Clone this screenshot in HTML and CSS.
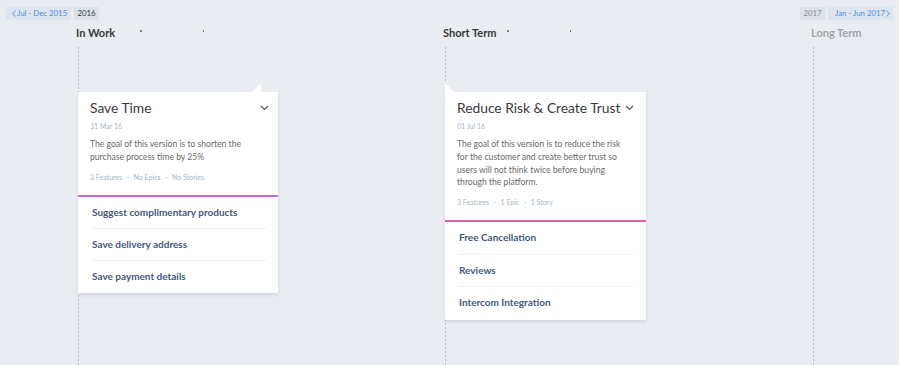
FILE: index.html
```html
<!DOCTYPE html>
<html lang="en">
<head>
<meta charset="utf-8">
<title>Roadmap</title>
<link rel="stylesheet" href="styles.css">
</head>
<body>
<div class="page">
  <div class="topbar">
    <div class="group">
      <span class="nav nav-prev"><svg class="nav-chev" width="4" height="7" viewBox="0 0 4 7"><polyline points="3.5,0.5 0.8,3.5 3.5,6.5" fill="none" stroke="#4a90e2" stroke-width="0.9"/></svg>Jul - Dec 2015</span>
      <span class="year">2016</span>
    </div>
    <div class="group">
      <span class="year muted">2017</span>
      <span class="nav nav-next">Jan - Jun 2017<svg class="nav-chev" width="4" height="7" viewBox="0 0 4 7"><polyline points="0.5,0.5 3.2,3.5 0.5,6.5" fill="none" stroke="#4a90e2" stroke-width="0.9"/></svg></span>
    </div>
  </div>
  <div class="columns">
    <div class="column">
      <div class="col-head">
        <span class="col-title">In Work</span>
        <span class="dots"><i></i><i></i></span>
      </div>
      <div class="track">
        <div class="card card-tip-right">
          <span class="tip"></span>
          <div class="card-body">
            <div class="card-title-row">
              <span class="card-title">Save Time</span>
              <svg class="chev" width="9" height="6" viewBox="0 0 9 6"><polyline points="1,1 4.5,4.5 8,1" fill="none" stroke="#555" stroke-width="1.2"/></svg>
            </div>
            <div class="date">31 Mar 16</div>
            <p class="desc">The goal of this version is to shorten the purchase process time by 25%</p>
            <div class="meta">3 Features <b>·</b> No Epics <b>·</b> No Stories</div>
          </div>
          <ul class="items purple">
            <li>Suggest complimentary products</li>
            <li>Save delivery address</li>
            <li>Save payment details</li>
          </ul>
        </div>
      </div>
    </div>
    <div class="column">
      <div class="col-head">
        <span class="col-title">Short Term</span>
        <span class="dots"><i></i><i></i></span>
      </div>
      <div class="track">
        <div class="card card-tip-left">
          <span class="tip"></span>
          <div class="card-body">
            <div class="card-title-row">
              <span class="card-title">Reduce Risk &amp; Create Trust</span>
              <svg class="chev" width="9" height="6" viewBox="0 0 9 6"><polyline points="1,1 4.5,4.5 8,1" fill="none" stroke="#555" stroke-width="1.2"/></svg>
            </div>
            <div class="date">01 Jul 16</div>
            <p class="desc">The goal of this version is to reduce the risk for the customer and create better trust so users will not think twice before buying through the platform.</p>
            <div class="meta">3 Features <b>·</b> 1 Epic <b>·</b> 1 Story</div>
          </div>
          <ul class="items pink">
            <li>Free Cancellation</li>
            <li>Reviews</li>
            <li>Intercom Integration</li>
          </ul>
        </div>
      </div>
    </div>
    <div class="column">
      <div class="col-head">
        <span class="col-title muted">Long Term</span>
      </div>
      <div class="track"></div>
    </div>
  </div>
</div>
</body>
</html>
```
FILE: styles.css
```css
* { box-sizing: border-box; }
html, body { margin: 0; padding: 0; }
body {
  background: #e9edf1;
  font-family: Lato, "Open Sans", Arial, sans-serif;
  color: #333;
  width: 899px;
  height: 365px;
  overflow: hidden;
}
.page {
  height: 365px;
  display: flex;
  flex-direction: column;
}
.topbar {
  display: flex;
  justify-content: space-between;
  padding: 7px 6px 0 6px;
  height: 20px;
}
.group { display: flex; gap: 3px; }
.nav, .year {
  height: 13px;
  line-height: 13px;
  font-size: 7.8px;
  display: inline-flex;
  align-items: center;
  white-space: nowrap;
  overflow: hidden;
}
.nav { background: #dde6ef; color: #4a90e2; }
.nav-prev { padding-left: 6px; width: 65px; }
.nav-prev .nav-chev { margin-right: 1px; flex: none; }
.nav-next { width: 65px; padding-left: 7px; }
.nav-next .nav-chev { margin-left: 1px; flex: none; }
.year {
  background: #dde2e8;
  color: #3a3a3a;
  width: 25px;
  justify-content: center;
}
.year.muted { color: #8a8f96; }

.columns {
  flex: 1;
  display: grid;
  grid-template-columns: 367px 368px 1fr;
  padding-left: 78px;
}
.column {
  display: flex;
  flex-direction: column;
}
.col-head {
  height: 25px;
  display: flex;
  align-items: center;
  margin-left: -2px;
  padding-bottom: 1px;
}
.col-title {
  font-size: 11px;
  font-weight: 700;
  color: #383838;
  width: 64px;
}
.col-title.muted { color: #a0a4a9; }
.dots { display: flex; gap: 61px; margin-top: -2px; }
.dots i {
  display: block;
  width: 1.5px;
  height: 1.5px;
  background: #666;
  border-radius: 50%;
}
.track {
  flex: 1;
  margin-top: 2px;
  background-image: linear-gradient(#b5bcc5 50%, transparent 50%);
  background-size: 1px 4px;
  background-repeat: repeat-y;
  background-position: 0 0;
  padding-top: 45px;
}
.card {
  position: relative;
  width: 200px;
  background: #fff;
  box-shadow: 0 2px 3px rgba(60, 75, 95, 0.14);
}
.card-tip-left { width: 201px; }
.tip {
  position: absolute;
  top: -9px;
  width: 0;
  height: 0;
  border-style: solid;
}
.card-tip-right .tip {
  left: 174px;
  border-width: 0 0 9px 9px;
  border-color: transparent transparent #fff transparent;
}
.card-tip-left .tip {
  left: 0;
  border-width: 0 9px 9px 0;
  border-color: transparent transparent #fff transparent;
}
.card-body { padding: 7px 12px 13px 12px; }
.card-title-row {
  display: flex;
  align-items: center;
  justify-content: space-between;
  height: 16px;
}
.card-title {
  font-size: 13.8px;
  color: #3a3a3a;
  white-space: nowrap;
}
.chev { margin-right: -3px; margin-top: 1px; flex: none; }
.card-tip-left .chev { margin-right: 0; }
.date {
  margin-top: 7px;
  font-size: 7px;
  color: #a9b6c8;
  line-height: 9px;
}
.desc {
  margin: 7px 0 0 0;
  max-width: 172px;
  font-size: 8.6px;
  line-height: 13.2px;
  color: #6a6a6a;
}
.card-tip-left .desc { line-height: 12.8px; }
.meta {
  margin-top: 9px;
  font-size: 7px;
  line-height: 9px;
  color: #a9b6c8;
}
.meta b { font-weight: 400; margin: 0 3px; color: #aab4c2; }
.items {
  list-style: none;
  margin: 0;
  padding: 0 12px 0 14px;
  border-top: 2px solid #c06af2;
}
.items.pink { border-top-color: #ec5aa6; }
.items li {
  height: 32.5px;
  line-height: 31px;
  font-size: 10px;
  font-weight: 700;
  color: #435a7d;
  border-bottom: 1px solid #eef0f3;
}
.items li:last-child { border-bottom: none; height: 32.5px; }
.card-tip-right .items li { height: 32px; }
.card-tip-right .items li:last-child { height: 32px; }
```
